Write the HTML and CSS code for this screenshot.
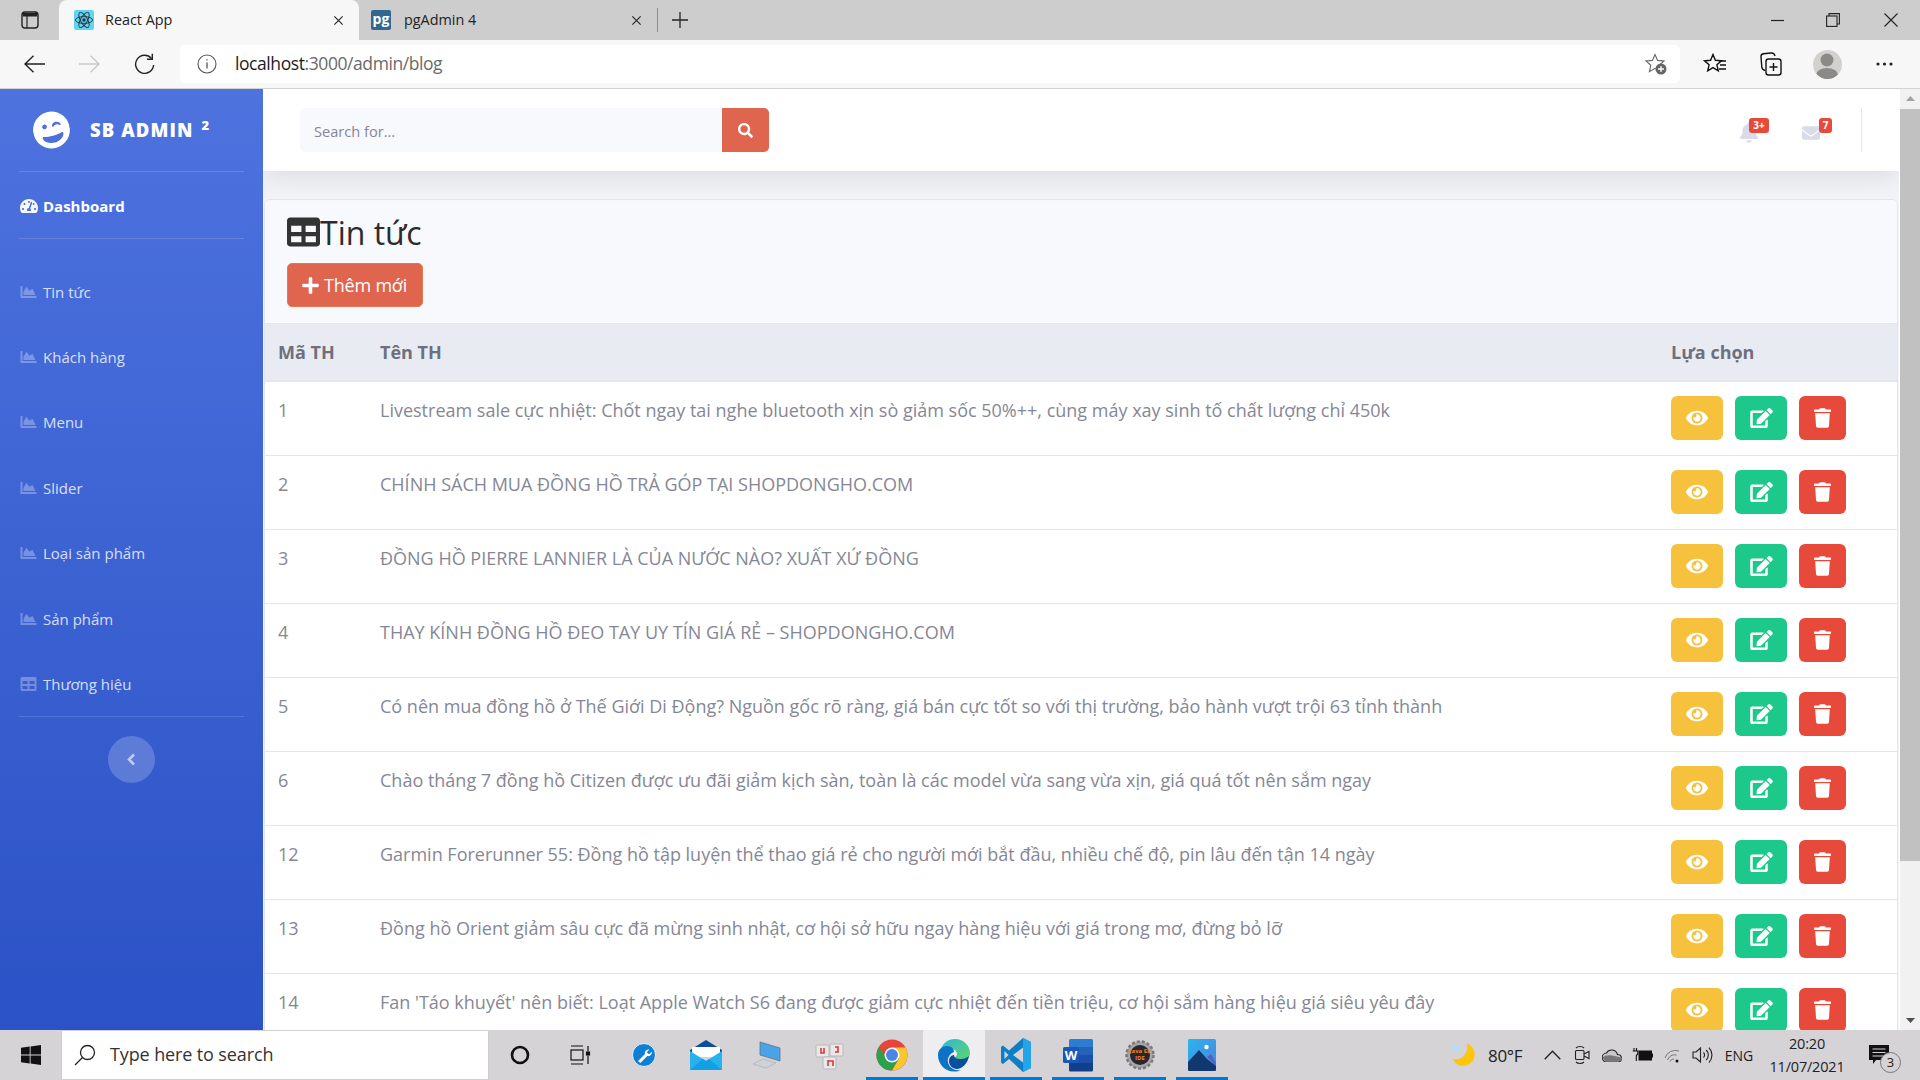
FILE: index.html
```html
<!DOCTYPE html>
<html lang="vi">
<head>
<meta charset="utf-8">
<title>React App</title>
<link rel="stylesheet" href="styles.css">
</head>
<body>
<svg class="sprite" aria-hidden="true">
  <symbol id="i-eye" viewBox="0 0 576 512"><path d="M572.52 241.4C518.29 135.59 410.93 64 288 64S57.68 135.64 3.48 241.41a32.35 32.35 0 0 0 0 29.19C57.71 376.41 165.07 448 288 448s230.32-71.64 284.52-177.41a32.35 32.35 0 0 0 0-29.19zM288 400a144 144 0 1 1 144-144 143.93 143.93 0 0 1-144 144zm0-240a95.31 95.31 0 0 0-25.31 3.79 47.85 47.85 0 0 1-66.9 66.9A95.78 95.78 0 1 0 288 160z"/></symbol>
  <symbol id="i-edit" viewBox="0 0 576 512"><path d="M402.6 83.2l90.2 90.2c3.8 3.8 3.8 10 0 13.8L274.4 405.6l-92.8 10.3c-12.4 1.4-22.9-9.1-21.5-21.5l10.3-92.8L388.8 83.2c3.8-3.8 10-3.8 13.8 0zm162-22.9l-48.8-48.8c-15.2-15.2-39.9-15.2-55.2 0l-35.4 35.4c-3.8 3.8-3.8 10 0 13.8l90.2 90.2c3.8 3.8 10 3.8 13.8 0l35.4-35.4c15.2-15.3 15.2-40 0-55.2zM384 346.2V448H64V128h229.8c3.2 0 6.2-1.3 8.5-3.5l40-40c7.6-7.6 2.2-20.5-8.5-20.5H48C21.5 64 0 85.5 0 112v352c0 26.5 21.5 48 48 48h352c26.5 0 48-21.5 48-48V306.2c0-10.7-12.9-16-20.5-8.5l-40 40c-2.2 2.3-3.5 5.3-3.5 8.5z"/></symbol>
  <symbol id="i-trash" viewBox="0 0 448 512"><path d="M432 32H312l-9.4-18.7A24 24 0 0 0 281.1 0H166.8a23.72 23.72 0 0 0-21.4 13.3L136 32H16A16 16 0 0 0 0 48v32a16 16 0 0 0 16 16h416a16 16 0 0 0 16-16V48a16 16 0 0 0-16-16zM53.2 467a48 48 0 0 0 47.9 45h245.8a48 48 0 0 0 47.9-45L416 128H32z"/></symbol>
  <symbol id="i-search" viewBox="0 0 512 512"><path d="M505 442.7L405.3 343c-4.5-4.5-10.6-7-17-7H372c27.6-35.3 44-79.7 44-128C416 93.1 322.9 0 208 0S0 93.1 0 208s93.1 208 208 208c48.3 0 92.7-16.4 128-44v16.3c0 6.4 2.5 12.5 7 17l99.7 99.7c9.4 9.4 24.6 9.4 33.9 0l28.3-28.3c9.4-9.4 9.4-24.6.1-34zM208 336c-70.7 0-128-57.2-128-128 0-70.7 57.2-128 128-128 70.7 0 128 57.2 128 128 0 70.7-57.2 128-128 128z"/></symbol>
  <symbol id="i-area" viewBox="0 0 512 512"><path d="M500 384c6.6 0 12 5.4 12 12v40c0 6.6-5.4 12-12 12H12c-6.6 0-12-5.4-12-12V76c0-6.6 5.4-12 12-12h40c6.6 0 12 5.4 12 12v308h436zM372.7 159.5L288 216l-85.3-113.7c-5.1-6.8-15.5-6.3-19.9 1L96 248v104h384l-89.9-187.8c-3.2-6.5-11.4-8.7-17.4-4.7z"/></symbol>
  <symbol id="i-table" viewBox="0 0 512 512"><path d="M464 32H48C21.49 32 0 53.49 0 80v352c0 26.51 21.49 48 48 48h416c26.51 0 48-21.49 48-48V80c0-26.51-21.49-48-48-48zM224 416H64v-96h160v96zm0-160H64v-96h160v96zm224 160H288v-96h160v96zm0-160H288v-96h160v96z"/></symbol>
  <symbol id="i-dash" viewBox="0 0 576 512"><path d="M288 32C128.94 32 0 160.94 0 320c0 52.8 14.25 102.26 39.06 144.8 5.61 9.62 16.3 15.2 27.44 15.2h443c11.14 0 21.83-5.58 27.44-15.2C561.75 422.26 576 372.8 576 320c0-159.06-128.94-288-288-288zm0 64c14.71 0 26.58 10.13 30.32 23.65-1.11 2.26-2.64 4.23-3.45 6.67l-9.22 27.67c-5.13 3.49-10.97 6.01-17.64 6.01-17.67 0-32-14.33-32-32S270.33 96 288 96zM96 384c-17.67 0-32-14.33-32-32s14.33-32 32-32 32 14.33 32 32-14.33 32-32 32zm48-160c-17.67 0-32-14.33-32-32s14.33-32 32-32 32 14.33 32 32-14.33 32-32 32zm246.77-72.41l-61.33 184C343.13 347.33 352 364.54 352 384c0 11.72-3.38 22.55-8.88 32H232.88c-5.5-9.45-8.88-20.28-8.88-32 0-33.94 26.5-61.43 59.9-63.59l61.34-184.01c4.17-12.56 17.73-19.45 30.36-15.17 12.57 4.19 19.35 17.79 15.17 30.36zm14.66 57.2l15.52-46.55c3.47-1.29 7.13-2.23 11.05-2.23 17.67 0 32 14.33 32 32s-14.33 32-32 32c-11.38-.01-20.89-6.28-26.57-15.22zM480 384c-17.67 0-32-14.33-32-32s14.33-32 32-32 32 14.33 32 32-14.33 32-32 32z"/></symbol>
  <symbol id="i-plus" viewBox="0 0 448 512"><path d="M416 208H272V64c0-17.67-14.33-32-32-32h-32c-17.67 0-32 14.33-32 32v144H32c-17.67 0-32 14.33-32 32v32c0 17.67 14.33 32 32 32h144v144c0 17.67 14.33 32 32 32h32c17.67 0 32-14.33 32-32V304h144c17.67 0 32-14.33 32-32v-32c0-17.67-14.33-32-32-32z"/></symbol>
  <symbol id="i-bell" viewBox="0 0 448 512"><path d="M224 512c35.32 0 63.97-28.65 63.97-64H160.03c0 35.35 28.65 64 63.97 64zm215.39-149.71c-19.32-20.76-55.47-51.99-55.47-154.29 0-77.7-54.48-139.9-127.94-155.16V32c0-17.67-14.32-32-31.98-32s-31.98 14.33-31.98 32v20.84C118.56 68.1 64.08 130.3 64.08 208c0 102.3-36.15 133.53-55.47 154.29-6 6.45-8.66 14.16-8.61 21.71.11 16.4 12.98 32 32.1 32h383.8c19.12 0 32-15.6 32.1-32 .05-7.55-2.61-15.27-8.61-21.71z"/></symbol>
  <symbol id="i-env" viewBox="0 0 512 512"><path d="M502.3 190.8c3.9-3.1 9.7-.2 9.7 4.7V400c0 26.5-21.5 48-48 48H48c-26.5 0-48-21.5-48-48V195.6c0-5 5.7-7.8 9.7-4.7 22.4 17.4 52.1 39.5 154.1 113.6 21.1 15.4 56.7 47.8 92.2 47.6 35.7.3 72-32.8 92.3-47.6 102-74.1 131.6-96.3 154-113.7zM256 320c23.2.4 56.6-29.2 73.4-41.4 132.7-96.3 142.8-104.7 173.4-128.7 5.8-4.5 9.2-11.5 9.2-18.9v-19c0-26.5-21.5-48-48-48H48C21.5 64 0 85.5 0 112v19c0 7.4 3.4 14.3 9.2 18.9 30.6 23.9 40.7 32.4 173.4 128.7 16.8 12.2 50.2 41.8 73.4 41.4z"/></symbol>
  <symbol id="i-wink" viewBox="0 0 496 512"><path d="M248 8C111 8 0 119 0 256s111 248 248 248 248-111 248-248S385 8 248 8zm20.1 198.1c4-25.2 34.2-42.1 59.9-42.1s55.9 16.9 59.9 42.1c1.7 11.1-11.4 18.3-19.8 10.8l-9.5-8.5c-14.8-13.2-46.2-13.2-61 0L288 217c-8.4 7.4-21.6.3-19.9-10.9zM168 160c17.7 0 32 14.3 32 32s-14.3 32-32 32-32-14.3-32-32 14.3-32 32-32zm80 272c-60.6 0-134.5-38.3-143.8-93.3-2-11.9 9.4-21.6 20.7-17.9C155.1 330.5 200 336 248 336s92.9-5.5 123.1-15.2c11.5-3.7 22.6 6.1 20.7 17.9-9.3 55-83.2 93.3-143.8 93.3z"/></symbol>
</svg>

<div class="tabstrip">
  <div class="tab-menu"><svg width="18" height="18" viewBox="0 0 18 18"><rect x="1" y="1" width="16" height="16" rx="3" fill="none" stroke="#222" stroke-width="1.4"/><path d="M2 2h14v3.5H2z" fill="#222"/><path d="M6 5v12" stroke="#222" stroke-width="1.2"/></svg></div>
  <div class="tab tab-active">
    <svg class="fav" viewBox="0 0 20 20"><rect width="20" height="20" rx="2" fill="#62d4ee"/><g fill="none" stroke="#1f3440" stroke-width=".9"><ellipse cx="10" cy="10" rx="8.6" ry="3.4"/><ellipse cx="10" cy="10" rx="8.6" ry="3.4" transform="rotate(60 10 10)"/><ellipse cx="10" cy="10" rx="8.6" ry="3.4" transform="rotate(120 10 10)"/></g><circle cx="10" cy="10" r="1.7" fill="#1f3440"/></svg>
    <span class="tab-title">React App</span>
    <svg class="tab-x" viewBox="0 0 12 12"><path d="M1.5 1.5l9 9M10.5 1.5l-9 9" stroke="#222" stroke-width="1.2"/></svg>
  </div>
  <div class="tab">
    <span class="fav fav-pg">pg</span>
    <span class="tab-title tab-title-pg">pgAdmin 4</span>
    <svg class="tab-x" viewBox="0 0 12 12"><path d="M1.5 1.5l9 9M10.5 1.5l-9 9" stroke="#222" stroke-width="1.2"/></svg>
  </div>
  <span class="tab-sep"></span>
  <svg class="tab-new" viewBox="0 0 16 16"><path d="M8 0v16M0 8h16" stroke="#222" stroke-width="1.3"/></svg>
  <div class="win-controls">
    <span class="win-btn win-min"><svg width="13" height="13" viewBox="0 0 13 13"><path d="M0 6.5h13" stroke="#222" stroke-width="1.2"/></svg></span>
    <span class="win-btn"><svg width="14" height="14" viewBox="0 0 14 14" fill="none" stroke="#222" stroke-width="1.1"><rect x=".6" y="3" width="10.4" height="10.4"/><path d="M3 3V.6h10.4V11H11"/></svg></span>
    <span class="win-btn"><svg width="14" height="14" viewBox="0 0 14 14"><path d="M.5.5l13 13M13.5.5l-13 13" stroke="#222" stroke-width="1.1"/></svg></span>
  </div>
</div>

<div class="toolbar">
  <span class="tool tool-first"><svg width="21" height="18" viewBox="0 0 21 18" fill="none" stroke="#222" stroke-width="1.4"><path d="M21 9H1M9.5.7L1 9l8.500 8.300"/></svg></span>
  <span class="tool"><svg width="21" height="18" viewBox="0 0 21 18" fill="none" stroke="#c8c8c8" stroke-width="1.4"><path d="M0 9h20M11.500.7L20 9l-8.500 8.300"/></svg></span>
  <span class="tool"><svg width="21" height="22" viewBox="0 0 21 22" fill="none" stroke="#222" stroke-width="1.4"><path d="M17.500 5.500A9 9 0 1 0 19.600 12"/><path d="M18.300.8v5.400h-5.400"/></svg></span>
  <div class="addr">
    <svg class="addr-info" width="20" height="20" viewBox="0 0 20 20" fill="none" stroke="#555"><circle cx="10" cy="10" r="9" stroke-width="1.1"/><path d="M10 8.500v6M10 5.200v1.400" stroke-width="1.3"/></svg>
    <span class="addr-url"><span class="addr-host">localhost</span>:3000/admin/blog</span>
    <svg class="addr-star" width="22" height="22" viewBox="0 0 22 22"><path d="M10 1.500l2.600 5.900 6.400.6-4.800 4.300 1.400 6.300L10 15.300l-5.600 3.300 1.400-6.300L1 8l6.400-.6z" fill="none" stroke="#666" stroke-width="1.1"/><circle cx="16" cy="16" r="5.500" fill="#666"/><path d="M16 13v6M13 16h6" stroke="#fff" stroke-width="1.300"/></svg>
  </div>
  <span class="tool tool-right"><svg width="24" height="22" viewBox="0 0 24 22" fill="none" stroke="#111" stroke-width="1.4"><path d="M10 1.500l2.400 5.800 6.100.5-4.600 4 1.400 6-5.300-3.200-5.300 3.200 1.400-6-4.600-4 6.100-.5z"/><path d="M16 8h7M17 12h6M16 16h7"/></svg></span>
  <span class="tool"><svg width="22" height="24" viewBox="0 0 22 24" fill="none" stroke="#111" stroke-width="1.4"><rect x="6" y="7" width="15" height="16" rx="2.500"/><path d="M5 18.500C3 18 2 17 1.800 15L1 5c-.2-2 1-3 2.500-3.200L11 1c2-.2 3.500.8 4 3"/><path d="M13.500 11v8M9.500 15h8"/></svg></span>
  <span class="tool"><span class="avatar"><svg width="28" height="29" viewBox="0 0 28 29"><circle cx="14" cy="10" r="6.500" fill="#8c8a86"/><ellipse cx="14" cy="25" rx="11" ry="7" fill="#8c8a86"/></svg></span></span>
  <span class="tool"><svg width="17" height="4" viewBox="0 0 17 4" fill="#222"><circle cx="2" cy="2" r="1.600"/><circle cx="8.500" cy="2" r="1.600"/><circle cx="15" cy="2" r="1.600"/></svg></span>
</div>

<div class="viewport">
  <aside class="sidebar">
    <div class="brand">
      <svg class="brand-icon"><use href="#i-wink"/></svg>
      <span class="brand-text">SB ADMIN <sup class="brand-sup">2</sup></span>
    </div>
    <hr class="side-hr">
    <a class="nav-dash"><svg class="nav-ico"><use href="#i-dash"/></svg>Dashboard</a>
    <hr class="side-hr">
    <nav class="nav-list">
      <a class="nav-item"><svg class="nav-ico"><use href="#i-area"/></svg>Tin tức</a>
      <a class="nav-item"><svg class="nav-ico"><use href="#i-area"/></svg>Khách hàng</a>
      <a class="nav-item"><svg class="nav-ico"><use href="#i-area"/></svg>Menu</a>
      <a class="nav-item"><svg class="nav-ico"><use href="#i-area"/></svg>Slider</a>
      <a class="nav-item"><svg class="nav-ico"><use href="#i-area"/></svg>Loại sản phẩm</a>
      <a class="nav-item"><svg class="nav-ico"><use href="#i-area"/></svg>Sản phẩm</a>
      <a class="nav-item"><svg class="nav-ico"><use href="#i-table"/></svg>Thương hiệu</a>
    </nav>
    <hr class="side-hr">
    <button class="side-toggle"><svg width="9" height="13" viewBox="0 0 9 13"><path d="M7 1.500L2 6.500l5 5" fill="none" stroke="#fff" stroke-opacity=".6" stroke-width="2.600"/></svg></button>
  </aside>

  <main class="main">
    <header class="topbar">
      <div class="search">
        <input class="search-input" placeholder="Search for...">
        <button class="search-btn"><svg class="search-ico"><use href="#i-search"/></svg></button>
      </div>
      <div class="top-right">
        <span class="top-alert top-bell"><svg class="bell-ico"><use href="#i-bell"/></svg><span class="badge badge-bell">3+</span></span>
        <span class="top-alert top-env"><svg class="env-ico"><use href="#i-env"/></svg><span class="badge badge-env">7</span></span>
        <span class="top-div"></span>
      </div>
    </header>

    <section class="card">
      <div class="card-head">
        <h2 class="title"><svg class="title-ico"><use href="#i-table"/></svg>Tin tức</h2>
        <button class="add-btn"><svg class="add-ico"><use href="#i-plus"/></svg>Thêm mới</button>
      </div>
      <table class="grid">
        <colgroup><col class="c-id"><col class="c-name"><col class="c-act"></colgroup>
        <thead><tr><th>Mã TH</th><th>Tên TH</th><th>Lựa chọn</th></tr></thead>
        <tbody>
          <tr><td>1</td><td>Livestream sale cực nhiệt: Chốt ngay tai nghe bluetooth xịn sò giảm sốc 50%++, cùng máy xay sinh tố chất lượng chỉ 450k</td><td class="acts"><span class="act a-view"><svg class="ic-eye"><use href="#i-eye"/></svg></span><span class="act a-edit"><svg class="ic-edit"><use href="#i-edit"/></svg></span><span class="act a-del"><svg class="ic-trash"><use href="#i-trash"/></svg></span></td></tr>
          <tr><td>2</td><td>CHÍNH SÁCH MUA ĐỒNG HỒ TRẢ GÓP TẠI SHOPDONGHO.COM</td><td class="acts"><span class="act a-view"><svg class="ic-eye"><use href="#i-eye"/></svg></span><span class="act a-edit"><svg class="ic-edit"><use href="#i-edit"/></svg></span><span class="act a-del"><svg class="ic-trash"><use href="#i-trash"/></svg></span></td></tr>
          <tr><td>3</td><td>ĐỒNG HỒ PIERRE LANNIER LÀ CỦA NƯỚC NÀO? XUẤT XỨ ĐỒNG</td><td class="acts"><span class="act a-view"><svg class="ic-eye"><use href="#i-eye"/></svg></span><span class="act a-edit"><svg class="ic-edit"><use href="#i-edit"/></svg></span><span class="act a-del"><svg class="ic-trash"><use href="#i-trash"/></svg></span></td></tr>
          <tr><td>4</td><td>THAY KÍNH ĐỒNG HỒ ĐEO TAY UY TÍN GIÁ RẺ – SHOPDONGHO.COM</td><td class="acts"><span class="act a-view"><svg class="ic-eye"><use href="#i-eye"/></svg></span><span class="act a-edit"><svg class="ic-edit"><use href="#i-edit"/></svg></span><span class="act a-del"><svg class="ic-trash"><use href="#i-trash"/></svg></span></td></tr>
          <tr><td>5</td><td>Có nên mua đồng hồ ở Thế Giới Di Động? Nguồn gốc rõ ràng, giá bán cực tốt so với thị trường, bảo hành vượt trội 63 tỉnh thành</td><td class="acts"><span class="act a-view"><svg class="ic-eye"><use href="#i-eye"/></svg></span><span class="act a-edit"><svg class="ic-edit"><use href="#i-edit"/></svg></span><span class="act a-del"><svg class="ic-trash"><use href="#i-trash"/></svg></span></td></tr>
          <tr><td>6</td><td>Chào tháng 7 đồng hồ Citizen được ưu đãi giảm kịch sàn, toàn là các model vừa sang vừa xịn, giá quá tốt nên sắm ngay</td><td class="acts"><span class="act a-view"><svg class="ic-eye"><use href="#i-eye"/></svg></span><span class="act a-edit"><svg class="ic-edit"><use href="#i-edit"/></svg></span><span class="act a-del"><svg class="ic-trash"><use href="#i-trash"/></svg></span></td></tr>
          <tr><td>12</td><td>Garmin Forerunner 55: Đồng hồ tập luyện thể thao giá rẻ cho người mới bắt đầu, nhiều chế độ, pin lâu đến tận 14 ngày</td><td class="acts"><span class="act a-view"><svg class="ic-eye"><use href="#i-eye"/></svg></span><span class="act a-edit"><svg class="ic-edit"><use href="#i-edit"/></svg></span><span class="act a-del"><svg class="ic-trash"><use href="#i-trash"/></svg></span></td></tr>
          <tr><td>13</td><td>Đồng hồ Orient giảm sâu cực đã mừng sinh nhật, cơ hội sở hữu ngay hàng hiệu với giá trong mơ, đừng bỏ lỡ</td><td class="acts"><span class="act a-view"><svg class="ic-eye"><use href="#i-eye"/></svg></span><span class="act a-edit"><svg class="ic-edit"><use href="#i-edit"/></svg></span><span class="act a-del"><svg class="ic-trash"><use href="#i-trash"/></svg></span></td></tr>
          <tr><td>14</td><td>Fan 'Táo khuyết' nên biết: Loạt Apple Watch S6 đang được giảm cực nhiệt đến tiền triệu, cơ hội sắm hàng hiệu giá siêu yêu đây</td><td class="acts"><span class="act a-view"><svg class="ic-eye"><use href="#i-eye"/></svg></span><span class="act a-edit"><svg class="ic-edit"><use href="#i-edit"/></svg></span><span class="act a-del"><svg class="ic-trash"><use href="#i-trash"/></svg></span></td></tr>
        </tbody>
      </table>
    </section>
  </main>

  <div class="scrollbar">
    <svg class="sb-arrow" width="9" height="5" viewBox="0 0 9 5"><path d="M4.500 0L9 5H0z" fill="#a3a3a3"/></svg>
    <span class="sb-thumb"></span>
    <svg class="sb-arrow sb-arrow-down" width="9" height="5" viewBox="0 0 9 5"><path d="M4.500 5L9 0H0z" fill="#505050"/></svg>
  </div>
</div>

<footer class="taskbar">
  <span class="start"><svg width="20" height="20" viewBox="0 0 20 20" fill="#111"><path d="M0 2.800l8.700-1.200v8H0zM9.600 1.400L20 0v9.600H9.600zM0 10.500h8.700v8L0 17.300zM9.600 10.500H20V20L9.600 18.600z"/></svg></span>
  <div class="task-search">
    <svg width="22" height="22" viewBox="0 0 22 22" fill="none" stroke="#222" stroke-width="1.300"><circle cx="13.500" cy="8.500" r="7"/><path d="M8.500 13.500L1 21"/></svg>
    <span>Type here to search</span>
  </div>
  <div class="task-apps">
    <span class="app"><svg width="20" height="20" viewBox="0 0 20 20"><circle cx="10" cy="10" r="8" fill="none" stroke="#111" stroke-width="2.600"/></svg></span>
    <span class="app app-view"><svg width="22" height="20" viewBox="0 0 22 20" fill="none" stroke="#111" stroke-width="1.200"><path d="M2 1h12M2 19h12"/><rect x="2" y="5" width="12" height="10"/><path d="M19 1v5M19 11v8"/><rect x="17.500" y="7" width="3" height="3" fill="#111"/></svg></span>
    <span class="app"><svg width="24" height="24" viewBox="0 0 24 24"><circle cx="12" cy="12" r="11.500" fill="#0f7fd6" stroke="#e8f2fb"/><path d="M6 18l7-7c-.8-2.500 1.500-5 4.500-4.500L15 9l.7 1.500L17.500 11 20 8.500c.3 3-2 5.300-4.700 4.500l-7 7z" fill="#fff"/></svg></span>
    <span class="app"><svg width="32" height="32" viewBox="0 0 32 32"><path d="M0 11L16 1l16 10v3H0z" fill="#0a4f9e"/><path d="M2 8h28v10H2z" fill="#fff"/><path d="M0 12l16 10 16-10v19H0z" fill="#27b2ee"/><path d="M0 31l13-11 3 2 3-2 13 11z" fill="#12a0e4"/></svg></span>
    <span class="app"><svg width="30" height="30" viewBox="0 0 30 30"><path d="M7 2l20 6v13L7 15z" fill="#4aa3e8" stroke="#5a6a7a" stroke-width=".7"/><path d="M0 24l10-5 13 4-10 5z" fill="#cfd3d8" stroke="#a5a9ad" stroke-width=".6"/></svg></span>
    <span class="app"><svg width="30" height="30" viewBox="0 0 30 30"><rect x="1" y="5" width="13" height="12" rx="1" fill="#e8e8e8" stroke="#b8b8b8"/><rect x="15" y="4" width="13" height="12" rx="1" fill="#e8e8e8" stroke="#b8b8b8"/><rect x="8" y="17" width="13" height="12" rx="1" fill="#e8e8e8" stroke="#b8b8b8"/><path d="M6 8v5h3V8M20 7h3v5h-3M13 20v6M13 21h5v5" fill="none" stroke="#d8393c" stroke-width="1.600"/></svg></span>
    <span class="app app-open"><svg width="32" height="32" viewBox="0 0 32 32"><circle cx="16" cy="16" r="15.500" fill="#e9443a"/><path d="M16 16L2.500 24A15.500 15.500 0 0 0 16 31.500l7-12z" fill="#2e9f4a"/><path d="M2.500 24A15.500 15.500 0 0 1 3 8l9 13z" fill="#2e9f4a"/><path d="M16 8.500h13.500A15.500 15.500 0 0 1 16 31.500l7-12z" fill="#f9c62e"/><circle cx="16" cy="16" r="7.500" fill="#fff"/><circle cx="16" cy="16" r="6" fill="#4a86e8"/></svg></span>
    <span class="app app-active"><svg width="34" height="34" viewBox="0 0 34 34"><defs><linearGradient id="eg" x1="0" y1="0" x2="1" y2="1"><stop offset="0" stop-color="#2fb7d8"/><stop offset="1" stop-color="#5fd66a"/></linearGradient></defs><path d="M3 14C5 5 11 1 18 1c9 0 15 7 15 14 0 5-4 7-8 7h-9c0-3 4-3 4-6 0-4-5-6-9-6-3 0-6 2-8 4z" fill="url(#eg)"/><path d="M1 17c0-6 5-9 9-9 5 0 7 3 7 6-3 1-7 5-6 10 1 6 7 9 13 8-2 1-4 1.500-7 1.500C8 33.500 1 26 1 17z" fill="#0c73c9"/><path d="M12 23c0-4 3-6 5-6 0 3 3 4 7 4 3 0 6-1 8-3-1 7-7 13-12 13-5 0-8-4-8-8z" fill="#0a4f9e"/></svg></span>
    <span class="app app-open"><svg width="30" height="34" viewBox="0 0 30 34"><path d="M22 0l8 4v26l-8 4-14-13-6 5-2-1.500V9l2-1.500 6 5z" fill="#0e7fc7"/><path d="M22 0l8 4v26l-8 4z" fill="#23a6e8"/><path d="M22 9.500L12 17l10 7.500z" fill="#d5d3d6"/><path d="M3.500 13l4 4-4 4z" fill="#d5d3d6"/></svg></span>
    <span class="app app-open"><svg width="30" height="34" viewBox="0 0 30 34"><rect x="6" y="1" width="24" height="32" rx="1.500" fill="#2b7cd3"/><path d="M6 9h24v8H6z" fill="#2563b8"/><path d="M6 17h24v8H6z" fill="#1a50a8"/><path d="M6 25h24v7a1.500 1.500 0 0 1-1.500 1.500H7.500A1.500 1.500 0 0 1 6 32z" fill="#123f8a"/><rect y="9" width="16" height="16" rx="1.500" fill="#1a58b8"/><text class="word-w" x="8" y="21.500">W</text></svg></span>
    <span class="app app-open"><svg width="30" height="32" viewBox="0 0 30 32"><circle cx="15" cy="16" r="13.500" fill="#a7a7a7" stroke="#7a7a7a" stroke-dasharray="3 2" stroke-width="2.500"/><circle cx="15" cy="16" r="10" fill="#2c2530"/><text class="java-t" x="15" y="14">Java EE</text><text class="java-t" x="15" y="21">IDE</text></svg></span>
    <span class="app app-open"><svg width="28" height="32" viewBox="0 0 28 32"><defs><linearGradient id="pg" x1="0" y1="0" x2="1" y2="1"><stop offset="0" stop-color="#29b5ec"/><stop offset="1" stop-color="#4f82dd"/></linearGradient></defs><rect width="28" height="32" rx="1.500" fill="url(#pg)"/><circle cx="18.500" cy="8" r="2.200" fill="#fff"/><path d="M0 27V23L11 11l8 9 9 7v3.500A1.500 1.500 0 0 1 26.500 32h-25A1.500 1.500 0 0 1 0 30.500z" fill="#10386f"/><path d="M19 18l9 9v-3l-5-9z" fill="#4d64c4"/></svg></span>
  </div>
  <div class="tray">
    <span class="t-moon"><svg width="26" height="26" viewBox="0 0 26 26"><path d="M17 1.500a11.500 11.500 0 1 1-14.500 15c3 1.500 7 1 10-1.500 4-3.500 5.500-8.500 4.500-13.500z" fill="#fdc60c"/><ellipse cx="6.500" cy="6" rx="5.500" ry="3" fill="#b9dcf2"/></svg></span>
    <span class="t-temp">80°F</span>
    <span class="t-ico"><svg width="17" height="10" viewBox="0 0 17 10" fill="none" stroke="#222" stroke-width="1.300"><path d="M.7 9.300L8.500 1.200l7.800 8.100"/></svg></span>
    <span class="t-ico"><svg width="16" height="20" viewBox="0 0 16 20" fill="none" stroke="#222" stroke-width="1.100"><rect x="1.500" y="5.500" width="8.500" height="9" rx="1"/><path d="M10 9l5-2.500v7L10 11M2 3c2-2 6-2 8 0M2 17c2 2 6 2 8 0"/></svg></span>
    <span class="t-ico"><svg width="21" height="14" viewBox="0 0 21 14"><path d="M5 14a4.500 4.500 0 0 1-.5-9 6 6 0 0 1 11 1.500 3.800 3.800 0 0 1 1 7.500z" fill="#c8c7c8" stroke="#222" stroke-width="1.100"/><path d="M.8 9.500c3-3 8-3 19.500.5-.5 2.500-2 3.500-3.300 3.500H5C3 13.500 1.500 12 .8 9.500z" fill="#777"/></svg></span>
    <span class="t-ico"><svg width="21" height="14" viewBox="0 0 21 14"><path d="M2 0v3M4.500 0v3M.8 3h5v3l-1.500 1.500V13" fill="none" stroke="#111" stroke-width="1.100"/><rect x="7" y="3" width="12.500" height="9" fill="#111" stroke="#111"/><rect x="19.500" y="5.500" width="1.500" height="4" fill="#111"/></svg></span>
    <span class="t-ico"><svg width="16" height="16" viewBox="0 0 16 16" fill="none"><path d="M1 11a11 11 0 0 1 14-7M3.500 13a7.500 7.500 0 0 1 9-5M6 14.500a4 4 0 0 1 4-2.500" stroke="#777" stroke-width="1"/><circle cx="13" cy="14" r="1.500" fill="#111"/></svg></span>
    <span class="t-ico"><svg width="21" height="18" viewBox="0 0 21 18" fill="none" stroke="#222" stroke-width="1.100"><path d="M1 6v6h3l4.500 4V2L4 6zM11.500 6.500a3.500 3.500 0 0 1 0 5M14.200 4a7 7 0 0 1 0 10M17 1.500a11 11 0 0 1 0 15"/></svg></span>
    <span class="t-eng">ENG</span>
    <span class="t-clock"><span>20:20</span><span>11/07/2021</span></span>
    <span class="t-note"><svg width="22" height="20" viewBox="0 0 22 20"><path d="M0 0h20v15H7l-3 4v-4H0z" fill="#111"/><path d="M3.500 4h13M3.500 7.500h13M3.500 11h13" stroke="#d5d3d6" stroke-width="1"/></svg><span class="t-count">3</span></span>
  </div>
</footer>
</body>
</html>
```

FILE: styles.css
```css
* { box-sizing: border-box; }
html, body { margin: 0; height: 100%; }
body {
  display: flex;
  flex-direction: column;
  height: 100vh;
  overflow: hidden;
  font-family: "Open Sans", "Noto Sans", sans-serif;
  background: #fff;
}
.sprite { display: none; }
svg { display: block; flex: none; }
use { fill: currentColor; }

/* browser tabs */
.tabstrip { display: flex; align-items: center; height: 40px; background: #cdcdcd; flex: none; }
.tab-menu { width: 59px; display: flex; justify-content: center; color: #222; }
.tab { display: flex; align-items: center; width: 298px; height: 40px; padding: 0 15px 0 12px; font-size: 14.4px; color: #222; }
.tab-active { width: 300px; padding-left: 15px; background: #f7f7f7; border-radius: 8px 8px 0 0; }
.fav { width: 20px; height: 20px; flex: none; }
.fav-pg { display: flex; align-items: center; justify-content: center; background: #336791; color: #fff; border-radius: 2px; font: 700 14px/1 "Open Sans", sans-serif; padding-bottom: 3px; }
.tab-title { margin-left: 11px; flex: 1; margin-top: -2px; }
.tab-title-pg { margin-left: 13px; }
.tab-x { width: 11px; height: 11px; }
.tab-sep { width: 1px; height: 24px; background: #8f8f8f; }
.tab-new { width: 16px; height: 16px; margin-left: 14px; }
.win-controls { margin-left: auto; display: flex; }
.win-btn { width: 58px; display: flex; justify-content: center; align-items: center; height: 38px; }
.win-min { width: 54px; }

/* browser toolbar */
.toolbar { display: flex; align-items: center; height: 49px; background: #f7f7f7; border-bottom: 1px solid #d2d2d2; padding-left: 7px; flex: none; }
.tool { width: 55px; display: flex; justify-content: center; align-items: center; }
.tool-right { margin-left: 7px; width: 56px; }
.toolbar .tool-right ~ .tool { width: 56.5px; }
.addr { margin-left: 8px; width: 1500px; height: 38px; background: #fff; border-radius: 5px; display: flex; align-items: center; padding: 0 13px 0 17px; margin-top: -1px; }
.addr-url { margin-left: 18px; font-size: 17.5px; color: #6a6a6a; letter-spacing: -.42px; margin-top: -2px; }
.addr-host { color: #1c1c1c; }
.addr-star { margin-left: auto; }
.avatar { width: 29px; height: 29px; border-radius: 50%; background: #d3d1cd; overflow: hidden; }

/* page viewport */
.viewport { flex: 1; min-height: 0; display: flex; overflow: hidden; }
.sidebar { width: 263px; flex: none; background: linear-gradient(180deg, #4e73df 0%, #2b52c6 100%); display: flex; flex-direction: column; align-items: stretch; padding: 0 19px; }
.brand { height: 82px; display: flex; align-items: center; margin: 0 -19px; padding-left: 33px; flex: none; }
.brand-icon { width: 37px; height: 38px; color: #fff; transform: rotate(-15deg); }
.brand-text { margin-left: 20px; color: #fff; font-weight: 800; font-size: 18.5px; letter-spacing: 1.1px; white-space: nowrap; margin-top: -2px; }
.brand-sup { font-size: 13px; vertical-align: 7px; line-height: 0; margin-left: 2px; }
.side-hr { margin: 0; border: 0; border-top: 1px solid rgba(255,255,255,.15); flex: none; }
.nav-dash { height: 66px; display: flex; align-items: center; color: #fff; font-weight: 700; font-size: 15px; flex: none; padding-top: 2px; }
.nav-list { margin: 19px 0 0; flex: none; }
.nav-item { height: 65.4px; display: flex; align-items: center; color: rgba(255,255,255,.8); font-size: 15px; padding-top: 2px; }
.nav-ico { width: 17px; height: 16px; margin: 0 6px 0 1px; color: rgba(255,255,255,.3); }
.nav-dash .nav-ico { color: rgba(255,255,255,.95); width: 18px; margin-right: 5px; margin-left: 1px; }
.side-toggle { width: 47px; height: 47px; border-radius: 50%; border: 0; padding: 0; background: rgba(255,255,255,.2); margin: 19px auto 0; display: flex; align-items: center; justify-content: center; flex: none; }

.main { flex: 1; min-width: 0; background: #f3f4f8; display: flex; flex-direction: column; overflow: hidden; }
.topbar { height: 82px; flex: none; background: #fff; box-shadow: 0 6px 28px rgba(58,59,69,.13); display: flex; align-items: center; padding-left: 37px; position: relative; }
.search { display: flex; height: 44px; }
.search-input { width: 422px; border: 0; outline: 0; background: #f8f9fc; border-radius: 5px 0 0 5px; padding: 1px 14px 0; font: 400 14.6px "Open Sans", sans-serif; color: #6e707e; }
.search-input::placeholder { color: #858796; opacity: 1; }
.search-btn { width: 47px; border: 0; background: #e0654f; border-radius: 0 5px 5px 0; display: flex; align-items: center; justify-content: center; padding: 0; }
.search-ico { width: 15px; height: 15px; color: #fff; }
.top-right { margin-left: auto; display: flex; align-items: center; height: 44px; }
.top-alert { position: relative; display: block; }
.top-bell { width: 18px; margin-right: 44px; }
.top-env { width: 18px; margin-right: 41px; }
.bell-ico { width: 18px; height: 21px; color: #d9dbe8; margin-top: 4px; }
.env-ico { width: 18px; height: 18px; color: #d9dbe8; margin-top: 5px; }
.badge { position: absolute; background: #e74a3b; color: #fff; font-size: 10px; font-weight: 700; line-height: 15px; height: 15px; border-radius: 3px; text-align: center; }
.badge-bell { width: 20px; left: 9px; top: 0; }
.badge-env { width: 13px; left: 17px; top: -1px; }
.top-div { width: 1px; height: 44px; background: #e3e6f0; margin-right: 37px; }

.card { margin: 28px 1px 0; border: 1px solid #e3e6f0; border-radius: 6px 6px 0 0; background: #fff; flex: none; }
.card-head { height: 123px; padding: 9px 22px 0; background: #f8f9fc; border-radius: 6px 6px 0 0; }
.title { display: flex; align-items: center; margin: 0 0 8px; height: 46px; font-size: 32px; font-weight: 400; color: #2c2c2c; }
.title-ico { width: 33px; height: 34px; color: #333; }
.add-btn { display: flex; align-items: center; width: 136px; height: 44px; border: 1px solid #e5764f; border-radius: 5px; background: #e0654f; color: #fff; font: 400 18px "Open Sans", sans-serif; padding: 0 0 0 14px; letter-spacing: -.2px; }
.add-ico { width: 17px; height: 19px; margin-right: 5px; }

.grid { width: 100%; border-collapse: separate; border-spacing: 0; table-layout: fixed; font-size: 18px; color: #858796; }
.c-id { width: 100px; }
.c-act { width: 240px; }
.grid th { text-align: left; height: 59px; padding: 0 15px 0 13px; background: #e9ebf3; color: #6e707e; font-weight: 700; border-top: 1px solid #e3e6f0; border-bottom: 2px solid #e3e6f0; }
.grid th:nth-child(2), .grid td:nth-child(2) { padding-left: 15px; }
.grid th:nth-child(3) { padding-left: 14px; }
.grid td { padding: 14px 15px 15px 13px; line-height: 28px; vertical-align: top; border-bottom: 1px solid #e3e6f0; white-space: nowrap; overflow: hidden; }
.grid td.acts { padding-left: 14px; font-size: 0; line-height: 0; }
.act { display: inline-flex; vertical-align: top; height: 44px; width: 52px; margin-right: 12px; border-radius: 6px; align-items: center; justify-content: center; color: #fff; }
.a-view { background: #f6c23e; }
.a-edit { background: #1cc88a; }
.a-del { background: #e74a3b; width: 47px; margin-right: 0; }
.ic-eye { width: 22px; height: 20px; }
.ic-edit { width: 23px; height: 20px; }
.ic-trash { width: 17px; height: 20px; }

.scrollbar { width: 20px; flex: none; background: #f1f1f1; margin-left: 1px; display: flex; flex-direction: column; align-items: center; padding-top: 7px; }
.sb-thumb { display: block; width: 100%; height: 752px; background: #c1c1c1; margin-top: 8px; }
.sb-arrow-down { margin-top: auto; margin-bottom: 7px; }

/* windows taskbar */
.taskbar { display: flex; height: 50px; flex: none; background: #d5d3d6; color: #111; align-items: stretch; }
.start { width: 61px; display: flex; align-items: center; justify-content: center; }
.task-search { width: 428px; background: #fff; border: 1px solid #cfcfcf; display: flex; align-items: center; padding-left: 12px; font-size: 18px; color: #333; }
.task-search span { margin-left: 14px; letter-spacing: -.12px; margin-top: -2px; }
.task-apps { display: flex; }
.app { width: 62px; display: flex; align-items: center; justify-content: center; position: relative; }
.app-view { padding-right: 4px; }
.app-open::after { content: ""; position: absolute; left: 5px; right: 5px; bottom: 0; height: 3px; background: #0078d4; }
.app-active { background: #eeeef1; }
.app-active::after { content: ""; position: absolute; left: 0; right: 0; bottom: 0; height: 3px; background: #0078d4; }
.word-w { font: 700 13px "Open Sans", sans-serif; fill: #fff; text-anchor: middle; }
.java-t { font: 700 6px "Open Sans", sans-serif; fill: #e88a1c; text-anchor: middle; }
.tray { margin-left: auto; display: flex; align-items: center; font-size: 16px; color: #222; }
.t-moon { width: 36px; display: flex; justify-content: center; }
.t-temp { width: 49px; margin-left: 7px; font-size: 17px; letter-spacing: -.3px; }
.t-ico { width: 30px; display: flex; justify-content: center; }
.t-eng { width: 44px; text-align: center; font-size: 14px; }
.t-clock { width: 92px; display: flex; flex-direction: column; align-items: center; font-size: 14.5px; line-height: 23px; letter-spacing: -.2px; }
.t-note { width: 67px; position: relative; display: flex; justify-content: center; padding-right: 14px; }
.t-count { position: absolute; left: 27px; top: 7px; width: 21px; height: 21px; border-radius: 50%; border: 1px solid #777; background: #d5d3d6; font-size: 13px; line-height: 19px; text-align: center; }
```
